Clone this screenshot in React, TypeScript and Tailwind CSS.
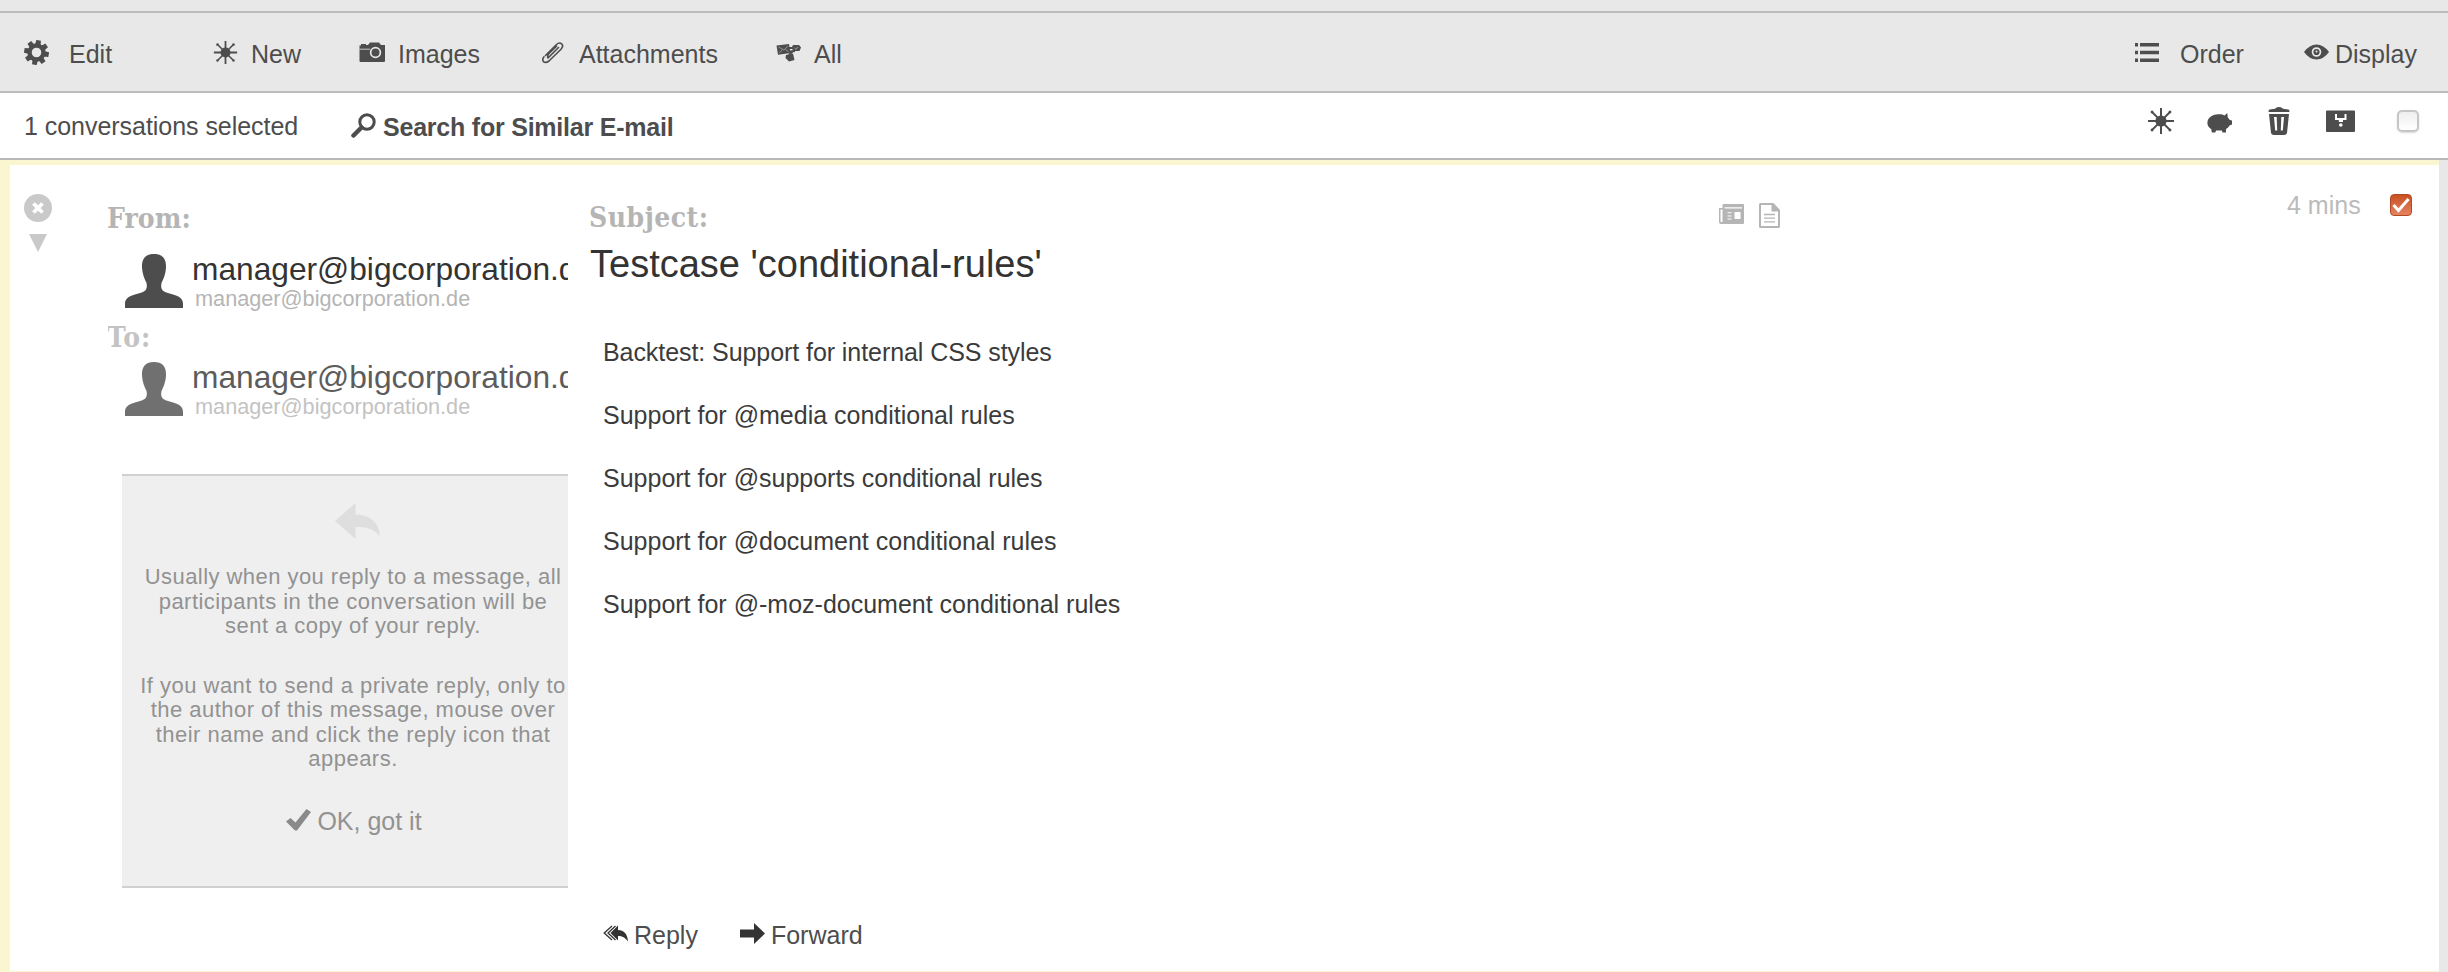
import type { ReactNode } from "react";

function Icon({ box, className, children }: { box: string; className: string; children: ReactNode }) {
  return (
    <svg viewBox={box} className={`block shrink-0 ${className}`} fill="currentColor" aria-hidden="true">
      {children}
    </svg>
  );
}

function Burst({ className }: { className: string }) {
  return (
    <Icon box="0 0 28 28" className={className}>
      <circle cx="14" cy="14" r="5.6" />
      <path d="M14 1 V27 M1 14 H27" stroke="currentColor" strokeWidth="2" />
      <path d="M4.5 4.5 L23.5 23.5 M23.5 4.5 L4.5 23.5" stroke="currentColor" strokeWidth="1.8" />
      <path d="M3.800 3.800 H6.300 V6.300 H3.800 Z M21.700 3.800 H24.200 V6.300 H21.700 Z M3.800 21.700 H6.300 V24.200 H3.800 Z M21.700 21.700 H24.200 V24.200 H21.700 Z" />
    </Icon>
  );
}

function Gear({ className }: { className: string }) {
  return (
    <Icon box="-12.5 -12.5 25 25" className={className}>
      <g transform="rotate(10)">
        {[0, 45, 90, 135, 180, 225, 270, 315].map((a) => (
          <path key={a} d="M-2.8 -7 L-2.3 -12.4 H2.3 L2.800 -7 Z" transform={`rotate(${a})`} />
        ))}
      </g>
      <circle r="7" fill="none" stroke="currentColor" strokeWidth="4.4" />
    </Icon>
  );
}

function Person({ className }: { className: string }) {
  return (
    <Icon box="0 0 58 54" className={className}>
      <path d="M29 0 C37 0 41.500 4 41 14 C40.600 20 38.500 25 36.500 29 C35.800 32 36 35 38 36.800 C41 39 46 39.500 51 41.500 C56 43.500 58 46 58 50 V54 H0 V50 C0 46 2 43.500 7 41.500 C12 39.500 17 39 20 36.800 C22 35 22.200 32 21.500 29 C19.500 25 17.400 20 17 14 C16.500 4 21 0 29 0 Z" />
    </Icon>
  );
}

function Contact({ className, nameColor, mailColor }: { className: string; nameColor: string; mailColor: string }) {
  return (
    <div className={`flex pl-[17px] ${className}`}>
      <Person className="mt-px h-[54px] w-[58px]" />
      <div className="ml-[9px] whitespace-nowrap">
        <div className={`text-[31.7px] leading-[32px] ${nameColor}`}>manager@bigcorporation.de</div>
        <div className={`pl-[3px] text-[21.7px] leading-[28px] ${mailColor}`}>manager@bigcorporation.de</div>
      </div>
    </div>
  );
}

const label = "font-['DejaVu_Serif_Condensed','DejaVu_Serif',serif] text-[28px] font-bold leading-[40px]";

function Toolbar() {
  return (
    <header className="flex h-[82px] items-center border-y-2 border-[#bcbcbc] bg-[#e8e8e8] text-[#4d4d4d]">
      <div className="flex w-[213px] items-center pl-6">
        <Gear className="h-[25px] w-[25px]" />
        <span className="ml-[20px] pt-[3px]">Edit</span>
      </div>
      <div className="flex w-[146px] items-center">
        <Burst className="h-[25px] w-[25px]" />
        <span className="ml-[13px] pt-[3px]">New</span>
      </div>
      <div className="flex w-[182px] items-center">
        <Icon box="0 0 26 20" className="h-[20px] w-[26px]">
          <path
            fillRule="evenodd"
            d="M2 2 H7 V3 H9 L11 0.500 H20 L22 3 H26 V19 Q26 20 25 20 H1.500 Q0.500 20 0.500 19 V3.500 L2 3.500 Z M16.500 4.800 A5.700 5.700 0 1 0 16.500 16.200 A5.700 5.700 0 1 0 16.500 4.800 Z M16.500 6.500 A4 4 0 1 1 16.500 14.500 A4 4 0 1 1 16.500 6.500 Z"
          />
          <path d="M0.500 7.200 H11" stroke="#e8e8e8" strokeWidth="0.8" />
        </Icon>
        <span className="ml-[13px] pt-[3px]">Images</span>
      </div>
      <div className="flex w-[235px] items-center">
        <Icon box="0 0 23 23" className="h-[23px] w-[23px]">
          <path
            d="M7 17 L17.500 6.500 M4.500 14.500 L15.500 3.500 Q18.500 0.800 20.800 3 Q22.800 5.300 20 8.200 L8 20 Q4.500 22.500 2.500 20.600 Q0.800 18.500 3 15.800 M7 17 Q6 14.500 8 12.500 L15.500 5.200"
            fill="none"
            stroke="currentColor"
            strokeWidth="1.600"
            strokeLinecap="round"
          />
        </Icon>
        <span className="ml-[15px] pt-[3px]">Attachments</span>
      </div>
      <div className="flex flex-1 items-center">
        <Icon box="0 0 25 19" className="h-[19px] w-[25px]">
          <path d="M0.500 2.500 L13 1 L14.500 10 L2 11.800 Z" />
          <path d="M17 2 H23 L25 4.500 L23.500 8 H17.500 L15.500 5 Z" />
          <path d="M10 12 L17 10.500 L18.500 17 L13 18.500 L9.500 15 Z" />
          <path d="M9 9 L19 8 M13 5 H18 M13 12 L17 8" stroke="currentColor" strokeWidth="2" />
          <path d="M2.500 4 L8 7 L12 2.800 M3.500 10 L6 7 M12.500 8.500 L9.500 6.500" fill="none" stroke="#9a9a9a" strokeWidth="0.900" />
          <path d="M18.500 5 L20 6.300 L22 4" fill="none" stroke="#a5a5a5" strokeWidth="0.900" />
        </Icon>
        <span className="ml-[13px] pt-[3px]">All</span>
      </div>
      <div className="flex w-[169px] items-center">
        <Icon box="0 0 24 19" className="h-[19px] w-[24px]">
          <path d="M0 0 H3 V3.500 H0 Z M5 0 H24 V3.500 H5 Z M0 7.700 H3 V11.200 H0 Z M5 7.700 H24 V11.200 H5 Z M0 15.400 H3 V18.900 H0 Z M5 15.400 H24 V18.900 H5 Z" />
        </Icon>
        <span className="ml-[21px] pt-[3px]">Order</span>
      </div>
      <div className="flex w-[144px] items-center">
        <Icon box="0 0 25 16" className="h-[16px] w-[25px]">
          <path
            fillRule="evenodd"
            d="M0 8 Q5.500 0.500 12.500 0.500 Q19.500 0.500 25 8 Q19.500 15.500 12.500 15.500 Q5.500 15.500 0 8 Z M12.500 3.200 A4.800 4.800 0 1 0 12.500 12.800 A4.800 4.800 0 1 0 12.500 3.200 Z"
          />
          <circle cx="12.500" cy="8" r="3.100" />
          <circle cx="12.500" cy="7.500" r="1" fill="#e8e8e8" />
        </Icon>
        <span className="ml-[6px] pt-[3px]">Display</span>
      </div>
    </header>
  );
}

function SelectionBar() {
  return (
    <div className="flex h-[67px] items-center border-b-2 border-[#b9b9b9] bg-white text-[#4d4d4d]">
      <span className="w-[328px] pl-[24px] tracking-[-0.04px]">1 conversations selected</span>
      <div className="flex flex-1 items-center pl-[23px]">
        <Icon box="0 0 25 25" className="h-[25px] w-[25px]">
          <circle cx="16" cy="9" r="7.200" fill="none" stroke="currentColor" strokeWidth="3" />
          <path d="M10.500 14.500 L2.500 22.500" stroke="currentColor" strokeWidth="4.500" strokeLinecap="round" />
        </Icon>
        <span className="ml-[7px] pt-[3px] font-bold tracking-[-0.22px]">Search for Similar E-mail</span>
      </div>
      <div className="flex w-[301px] items-center pb-[9px]">
        <Burst className="h-[28px] w-[28px]" />
        <Icon box="0 0 25 20" className="ml-[32px] mt-[4px] h-[20px] w-[25px]">
          <path d="M11 1.300 C13.500 1 16 1.600 17.500 2.500 L20.300 0 L20.800 4.500 C21.800 5.500 22.500 6.500 22.800 7 L25 7.500 V11.500 L22.500 12.500 C21.800 14 20.500 15.300 19 16 V19.500 H15.500 L14.800 17.500 H9 L8.300 19.500 H4.800 L4.300 16.300 C1 14 0 11.500 0.500 8.500 C1.500 4 6 1.500 11 1.300 Z" />
        </Icon>
        <Icon box="0 0 22 28" className="ml-[36px] h-[28px] w-[22px]">
          <path
            fillRule="evenodd"
            d="M7 1.800 Q8 0 11 0 Q14 0 15 1.800 L20.500 2.600 Q21.500 3 21.500 5 H0.500 Q0.500 3 1.500 2.600 Z M1 7 H21 L19 26 Q18.500 28 16 28 H6 Q3.500 28 3 26 Z M6 10 L7.200 23.500 H9.200 L8.700 10 Z M13.300 10 L12.800 23.500 H14.800 L16 10 Z"
          />
        </Icon>
        <Icon box="0 0 29 22" className="ml-[36px] h-[22px] w-[29px]">
          <path
            fillRule="evenodd"
            d="M1 0.500 H28 Q29 0.500 29 1.500 V21 Q29 22 28 22 H1 Q0 22 0 21 V1.500 Q0 0.500 1 0.500 Z M9 4 V10 H12.800 V12 H17 V10 H20.500 V4 H18.500 V8 H11 V4 Z M14.800 13.200 A1.800 1.800 0 1 0 14.800 16.800 A1.800 1.800 0 1 0 14.800 13.200 Z"
          />
        </Icon>
        <span className="ml-[42px] h-[22px] w-[22px] rounded-[5px] border-2 border-[#c6c6c6] bg-gradient-to-b from-[#eeeeee] to-white shadow-[0_1px_2px_rgba(0,0,0,0.15)]" />
      </div>
    </div>
  );
}

function ReplyTip() {
  return (
    <section className="ml-[14px] mt-[53px] h-[414px] overflow-hidden border-y-2 border-[#d0d0d0] bg-[#efefef] text-[#929292]">
      <div className="flex w-[462px] flex-col items-center">
        <Icon box="0 0 45 36" className="ml-[8px] mt-[27px] h-[36px] w-[45px] text-[#dedede]">
          <path d="M0 18 L20.500 0 V11.500 C34 11.500 44 19 45 33 C38 26 32 23.500 20.500 24 V36 Z" />
        </Icon>
        <p className="mt-[26px] whitespace-nowrap text-center text-[22px] leading-[24.5px] tracking-[0.45px]">
          Usually when you reply to a message, all
          <br />
          participants in the conversation will be
          <br />
          sent a copy of your reply.
        </p>
        <p className="mt-[35px] whitespace-nowrap text-center text-[22px] leading-[24.5px] tracking-[0.48px]">
          If you want to send a private reply, only to
          <br />
          the author of this message, mouse over
          <br />
          their name and click the reply icon that
          <br />
          appears.
        </p>
        <div className="ml-[2px] mt-[32px] flex items-center">
          <Icon box="0 0 25 22" className="h-[22px] w-[25px] text-[#8a8a8a]">
            <path d="M0 12.500 L4.500 9 L9.500 13.500 L20.500 0 L25 3 L11 21.500 H9 Z" />
          </Icon>
          <span className="ml-[6px] leading-[30px] pt-[2px]">OK, got it</span>
        </div>
      </div>
    </section>
  );
}

const body = [
  { text: "Backtest: Support for internal CSS styles", spacing: "tracking-[-0.07px]" },
  { text: "Support for @media conditional rules", spacing: "tracking-normal" },
  { text: "Support for @supports conditional rules", spacing: "tracking-normal" },
  { text: "Support for @document conditional rules", spacing: "tracking-normal" },
  { text: "Support for @-moz-document conditional rules", spacing: "tracking-normal" },
];

function Message() {
  return (
    <main className="flex h-[812px] w-[2439px] border-b border-l-[10px] border-t-[5px] border-[#faf6d0] bg-white">
      <div className="flex w-[98px] flex-col pl-[14px] pt-[29px] text-[#c9c9c9]">
        <Icon box="0 0 28 28" className="h-[28px] w-[28px]">
          <circle cx="14" cy="14" r="14" />
          <path d="M9.500 9.500 L18.500 18.500 M18.500 9.500 L9.500 18.500" stroke="#fff" strokeWidth="3.800" />
        </Icon>
        <Icon box="0 0 18 18" className="ml-[5px] mt-[12px] h-[18px] w-[18px]">
          <path d="M0 0 H18 L9 18 Z" />
        </Icon>
      </div>

      <aside className="w-[460px] overflow-hidden pt-[34px]">
        <div className={`${label} -ml-px tracking-[0.1px] text-[#b5b5b5]`}>From:</div>
        <Contact className="mt-[14px] text-[#4d4d4d]" nameColor="text-[#333333]" mailColor="text-[#b5b5b5]" />
        <div className={`${label} -ml-px mt-[5px] tracking-[0.8px] text-[#c3c3c3]`}>To:</div>
        <Contact className="mt-[3px] text-[#707070]" nameColor="text-[#5c5c5c]" mailColor="text-[#c3c3c3]" />
        <ReplyTip />
      </aside>

      <article className="flex flex-1 flex-col pl-[22px] pt-[33px]">
        <div className={`${label} -ml-px tracking-[0.5px] text-[#b5b5b5]`}>Subject:</div>
        <h1 className="mt-[5px] text-[38px] leading-[43px] text-[#333333]">Testcase 'conditional-rules'</h1>
        <div className="mt-[51px] flex flex-1 flex-col gap-[33px] pl-[13px] text-[#3b3b3b]">
          {body.map((line) => (
            <p key={line.text} className={`leading-[30px] ${line.spacing}`}>
              {line.text}
            </p>
          ))}
        </div>
        <div className="mb-[21px] flex items-center pl-[13px] text-[#333333]">
          <Icon box="0 0 25 17" className="h-[17px] w-[25px]">
            <path d="M7.500 8 L15 0.500 V5 C21 5 24.500 9 25 16.500 C22 12.500 19.500 11 15 11 V15.500 Z" />
            <path d="M9 1 L1.200 8 L9 15 M12.500 1 L5 8 L12.500 15" fill="none" stroke="currentColor" strokeWidth="1.300" />
          </Icon>
          <span className="ml-[6px] text-[#4d4d4d] leading-[30px] pt-[3px]">Reply</span>
          <Icon box="0 0 25 21" className="ml-[42px] h-[21px] w-[25px]">
            <path d="M0 6.500 H14 V0 L25 10.500 L14 21 V14.500 H0 Z" />
          </Icon>
          <span className="ml-[6px] text-[#4d4d4d] leading-[30px] pt-[3px]">Forward</span>
        </div>
      </article>

      <div className="flex w-[567px] items-start gap-[15px] pt-[38px] text-[#b5b5b5]">
        <Icon box="0 0 25 20" className="mt-[1px] h-[20px] w-[25px]">
          <path
            fillRule="evenodd"
            d="M5 0 H24 Q25 0 25 1 V19 Q25 20 24 20 H2 Q0 20 0 18 V4 H3.500 V1 Q3.500 0 5 0 Z M5.500 3.200 V4.600 H23 V3.200 Z M1.500 5.500 V17.500 Q1.500 18 2.500 18 Q3.500 18 3.500 17.500 V5.500 Z M15.500 8 V15 H21.500 V8 Z M8.500 8.300 V9.300 H12.500 V8.300 Z M8.500 11.500 V12.500 H12.500 V11.500 Z M8.500 14.600 V15.600 H12.500 V14.600 Z"
          />
        </Icon>
        <Icon box="0 0 21 25" className="h-[25px] w-[21px]">
          <path
            fillRule="evenodd"
            d="M1.500 0 H14.500 L21 7 V23.500 Q21 25 19.500 25 H1.500 Q0 25 0 23.500 V1.500 Q0 0 1.500 0 Z M2 2 V23 H19 V8.500 H12.500 V2 Z"
          />
          <path d="M5 11.500 H16 M5 15.200 H16 M5 18.900 H16" stroke="currentColor" strokeWidth="1.300" />
        </Icon>
      </div>

      <div className="flex w-[153px] items-start pt-[23px]">
        <span className="w-[104px] pl-px leading-[34px] text-[#bbbbbb]">4 mins</span>
        <span className="mt-[6px] flex h-[22px] w-[22px] items-center justify-center rounded-[4px] border border-[#b04a22] bg-gradient-to-b from-[#c8501f] to-[#e5835f]">
          <Icon box="0 0 18 16" className="h-[16px] w-[18px]">
            <path d="M1.500 8 L6.500 13.500 L16.500 2" fill="none" stroke="#ffffff" strokeWidth="3" />
          </Icon>
        </span>
      </div>
    </main>
  );
}

export default function App() {
  return (
    <div className="h-[972px] w-[2448px] overflow-hidden bg-[#e8e8e8] pt-[11px] font-['Liberation_Sans',Arial,sans-serif] text-[25px] leading-[30px]">
      <Toolbar />
      <SelectionBar />
      <Message />
    </div>
  );
}
